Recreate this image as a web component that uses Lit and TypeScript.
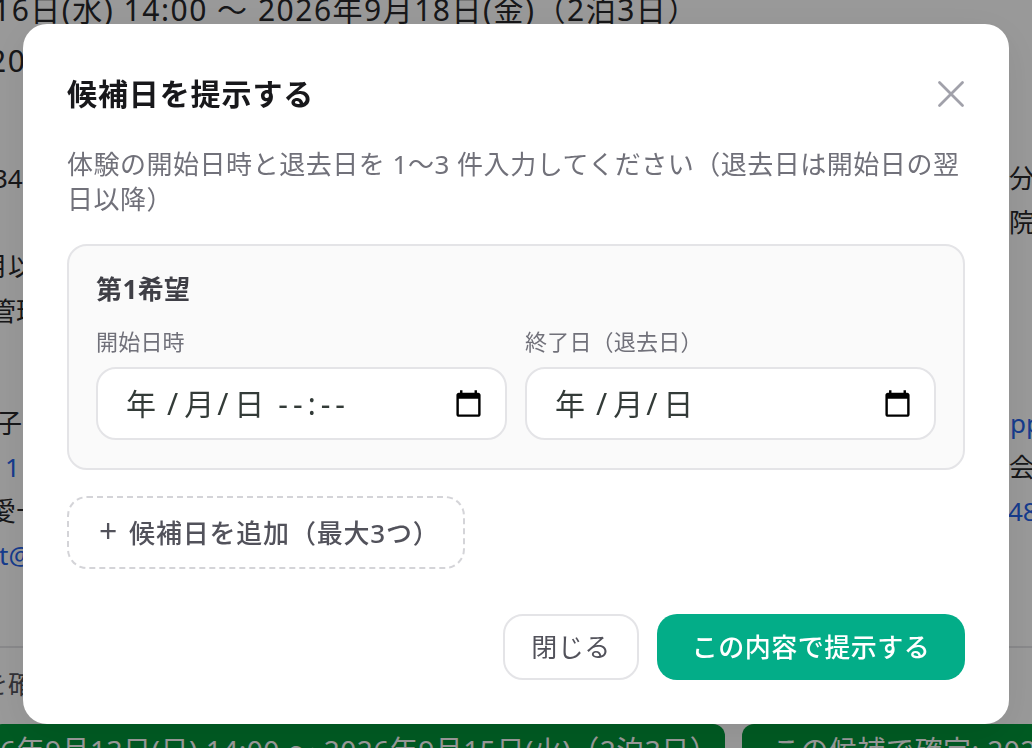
import { LitElement, html, css } from "lit";
import { customElement } from "lit/decorators.js";

interface Frag { text: string; x: number; link?: boolean }
interface Row { left?: Frag; right?: Frag }

const groupA: Row[] = [
  { left: { text: "34", x: -7 }, right: { text: "分", x: -1 } },
  { right: { text: "院", x: -1 } },
  { left: { text: "月以", x: -18 } },
  { left: { text: "管理", x: -10 } },
];
const groupB: Row[] = [
  { left: { text: "子", x: -4 }, right: { text: "pp", x: 0, link: true } },
  { left: { text: "1", x: 5, link: true }, right: { text: "会", x: -1 } },
  { left: { text: "愛十", x: -10 }, right: { text: "48", x: -2, link: true } },
  { left: { text: "t@", x: -1, link: true } },
];

@customElement("app-root")
export class AppRoot extends LitElement {
  static styles = css`
    :host {
      display: block;
      width: 1032px;
      height: 748px;
      overflow: hidden;
      font-family: "Noto Sans", "Noto Sans CJK JP", sans-serif;
    }
    .page {
      width: 1032px;
      height: 748px;
      overflow: hidden;
      background: #fff;
      color: #27272a;
      display: flex;
      flex-direction: column;
      white-space: nowrap;
    }
    .date {
      font-size: 30px;
      line-height: 44px;
      letter-spacing: 1.5px;
      color: #27272a;
    }
    .date1 { margin: -12px 0 0 -7px; }
    .date2 { margin: 7px 0 0 -11px; }
    .group { display: flex; flex-direction: column; }
    .groupA { margin-top: 73px; }
    .groupB { margin-top: 68px; }
    .row {
      display: grid;
      grid-template-columns: 1010px 1fr;
      font-size: 26px;
      line-height: 44.2px;
      height: 44.2px;
    }
    .link { color: #2563eb; }
    .foot {
      margin-top: auto;
      border-top: 2px solid #e4e4e7;
      height: 78px;
      padding-top: 14px;
      box-sizing: border-box;
      font-size: 26px;
      line-height: 44px;
      color: #52525b;
    }
    .foot span { display: block; margin-left: -18px; }
    .bars {
      display: flex;
      gap: 17px;
      height: 24px;
      overflow: hidden;
    }
    .bar {
      flex: none;
      height: 60px;
      background: #00963a;
      color: #fff;
      border-radius: 12px;
      font-size: 28px;
      line-height: 44px;
      letter-spacing: 0.5px;
      box-sizing: border-box;
      padding-top: 4px;
    }
    .bar1 { width: 735px; margin-left: -10px; padding-left: 10px; }
    .bar2 { width: 320px; padding-left: 30px; }

    .overlay {
      position: fixed;
      inset: 0;
      background: rgba(0, 0, 0, 0.4);
      display: flex;
      align-items: center;
      justify-content: center;
    }
    .modal {
      width: 986px;
      height: 700px;
      box-sizing: border-box;
      padding: 44px;
      background: #fff;
      border-radius: 24px;
      box-shadow: 0 10px 40px rgba(0, 0, 0, 0.08);
      display: flex;
      flex-direction: column;
    }
    .head {
      display: flex;
      align-items: center;
      justify-content: space-between;
      height: 52px;
    }
    h2 {
      margin: 0;
      font-size: 30px;
      line-height: 52px;
      font-weight: 700;
      letter-spacing: 0.9px;
      color: #18181b;
    }
    .x {
      width: 30px;
      height: 30px;
      padding: 0;
      margin-right: -1px;
      border: 0;
      background: none;
      display: flex;
      align-items: center;
      justify-content: center;
    }
    .x svg { width: 30px; height: 30px; display: block; }
    .sub {
      margin: 27px 0 0;
      font-size: 26px;
      line-height: 35.4px;
      letter-spacing: 0.52px;
      color: #71717a;
    }
    .card {
      margin-top: 26px;
      box-sizing: border-box;
      height: 226px;
      border: 2px solid #e4e4e7;
      border-radius: 20px;
      background: #fafafa;
      padding: 27px 27px 0;
    }
    .card h3 {
      margin: 0;
      font-size: 26px;
      line-height: 32px;
      font-weight: 700;
      letter-spacing: 0.4px;
      color: #3f3f46;
    }
    .fields {
      margin-top: 19px;
      display: grid;
      grid-template-columns: 411px 411px;
      gap: 18px;
    }
    .field label {
      display: block;
      font-size: 22px;
      line-height: 34px;
      letter-spacing: 0.2px;
      color: #71717a;
    }
    .input {
      margin-top: 9px;
      box-sizing: border-box;
      height: 73px;
      border: 2px solid #e4e4e7;
      border-radius: 20px;
      background: #fff;
      padding: 0 22px 0 28px;
      display: flex;
      align-items: center;
      justify-content: space-between;
      font-size: 30px;
      color: #333b38;
      white-space: pre;
    }
    .value { letter-spacing: 3px; padding-bottom: 2px; }
    .sl1 { margin: 0 3px 0 8px; }
    .sl2 { margin-right: 3px; }
    .time { letter-spacing: 5px; margin-left: 11px; }
    .input svg { width: 29px; height: 29px; display: block; }
    .add {
      margin-top: 26.5px;
      align-self: flex-start;
      box-sizing: border-box;
      width: 398px;
      height: 73px;
      border: 2px dashed #d4d4d8;
      border-radius: 20px;
      background: #fff;
      padding: 0 0 2px 30px;
      text-align: left;
      font: inherit;
      font-size: 26px;
      font-weight: 500;
      letter-spacing: 0.8px;
      color: #52525b;
    }
    .plus { font-size: 32px; line-height: 26px; font-weight: 400; margin-right: 11px; }
    .actions {
      margin-top: auto;
      display: flex;
      justify-content: flex-end;
      gap: 18px;
    }
    .btn {
      height: 66px;
      box-sizing: border-box;
      border-radius: 20px;
      font: inherit;
      font-size: 26px;
      letter-spacing: 0.52px;
      padding: 0 0 2px;
    }
    .close {
      width: 136px;
      border: 2px solid #e4e4e7;
      background: #fff;
      color: #52525b;
    }
    .submit {
      width: 308px;
      border: 0;
      background: #03ad88;
      color: #fff;
      font-weight: 500;
    }
  `;

  private frag(f?: Frag) {
    if (!f) return html`<span></span>`;
    return html`<span class=${f.link ? "link" : ""} style="margin-left:${f.x}px">${f.text}</span>`;
  }

  private cal() {
    return html`<svg viewBox="0 0 24 24" fill="#000"><path d="M20 3h-1V1h-2v2H7V1H5v2H4c-1.1 0-2 .9-2 2v16c0 1.1.9 2 2 2h16c1.1 0 2-.9 2-2V5c0-1.1-.9-2-2-2zm0 18H4V8h16v13z"/></svg>`;
  }

  private ymd() {
    return html`年<span class="sl1">/</span>月<span class="sl2">/</span>日`;
  }

  render() {
    return html`
      <div class="page">
        <div class="date date1">16日(水) 14:00 〜 2026年9月18日(金)（2泊3日）</div>
        <div class="date date2">20</div>
        <div class="group groupA">
          ${groupA.map((r) => html`<div class="row">${this.frag(r.left)}${this.frag(r.right)}</div>`)}
        </div>
        <div class="group groupB">
          ${groupB.map((r) => html`<div class="row">${this.frag(r.left)}${this.frag(r.right)}</div>`)}
        </div>
        <div class="foot"><span>を確</span></div>
        <div class="bars">
          <div class="bar bar1">6年9月13日(日) 14:00 〜 2026年9月15日(火)（2泊3日）</div>
          <div class="bar bar2">この候補で確定: 2026</div>
        </div>
      </div>
      <div class="overlay">
        <div class="modal">
          <div class="head">
            <h2>候補日を提示する</h2>
            <button class="x" aria-label="閉じる">
              <svg viewBox="0 0 30 30" fill="none" stroke="#a1a1aa" stroke-width="2.8" stroke-linecap="round">
                <path d="M3.5 3.5 26.5 26.5M26.5 3.5 3.5 26.5" />
              </svg>
            </button>
          </div>
          <p class="sub">体験の開始日時と退去日を 1〜3 件入力してください（退去日は開始日の翌日以降）</p>
          <div class="card">
            <h3>第1希望</h3>
            <div class="fields">
              <div class="field">
                <label>開始日時</label>
                <div class="input"><span class="value">${this.ymd()}<span class="time">--:--</span></span>${this.cal()}</div>
              </div>
              <div class="field">
                <label>終了日（退去日）</label>
                <div class="input"><span class="value">${this.ymd()}</span>${this.cal()}</div>
              </div>
            </div>
          </div>
          <button class="add"><span class="plus">+</span>候補日を追加（最大3つ）</button>
          <div class="actions">
            <button class="btn close">閉じる</button>
            <button class="btn submit">この内容で提示する</button>
          </div>
        </div>
      </div>
    `;
  }
}
